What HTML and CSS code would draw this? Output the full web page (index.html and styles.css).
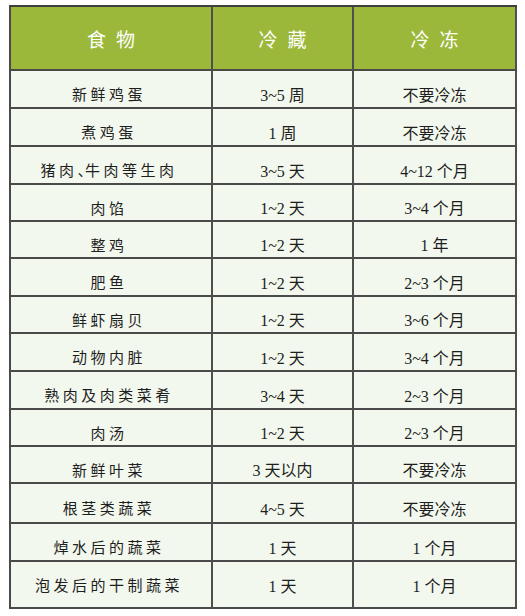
FILE: index.html
```
<!DOCTYPE html>
<html lang="zh-CN">
<head>
<meta charset="utf-8">
<title>食物储存时间</title>
<link rel="stylesheet" href="styles.css">
</head>
<body>
<div class="wrap">
  <div class="table">
    <div class="cell head">食物</div>
    <div class="cell head">冷藏</div>
    <div class="cell head">冷冻</div>

    <div class="cell food">新鲜鸡蛋</div><div class="cell">3~5 周</div><div class="cell">不要冷冻</div>
    <div class="cell food">煮鸡蛋</div><div class="cell">1 周</div><div class="cell">不要冷冻</div>
    <div class="cell food">猪肉<span class="comma">、</span>牛肉等生肉</div><div class="cell">3~5 天</div><div class="cell">4~12 个月</div>
    <div class="cell food">肉馅</div><div class="cell">1~2 天</div><div class="cell">3~4 个月</div>
    <div class="cell food">整鸡</div><div class="cell">1~2 天</div><div class="cell">1 年</div>
    <div class="cell food">肥鱼</div><div class="cell">1~2 天</div><div class="cell">2~3 个月</div>
    <div class="cell food">鲜虾扇贝</div><div class="cell">1~2 天</div><div class="cell">3~6 个月</div>
    <div class="cell food">动物内脏</div><div class="cell">1~2 天</div><div class="cell">3~4 个月</div>
    <div class="cell food">熟肉及肉类菜肴</div><div class="cell">3~4 天</div><div class="cell">2~3 个月</div>
    <div class="cell food">肉汤</div><div class="cell">1~2 天</div><div class="cell">2~3 个月</div>
    <div class="cell food">新鲜叶菜</div><div class="cell">3 天以内</div><div class="cell">不要冷冻</div>
    <div class="cell food">根茎类蔬菜</div><div class="cell">4~5 天</div><div class="cell">不要冷冻</div>
    <div class="cell food">焯水后的蔬菜</div><div class="cell">1 天</div><div class="cell">1 个月</div>
    <div class="cell food last">泡发后的干制蔬菜</div><div class="cell last">1 天</div><div class="cell last">1 个月</div>
  </div>
</div>
</body>
</html>
```

FILE: styles.css
```
html, body {
  margin: 0;
  padding: 0;
  background: #ffffff;
}

.wrap {
  padding: 5px 0 0 9px;
}

.table {
  display: grid;
  grid-template-columns: 202px 141px 163px;
  grid-template-rows: 64px 38px 38px 38px 37px 37px 38px 37px 38px 38px 37px 37px 40px 38px 47px;
  width: max-content;
  border-top: 2px solid #3f3f3f;
  border-left: 2px solid #4a4a4a;
  background: #f3f8ee;
  font-family: "Liberation Serif", "Noto Sans CJK SC", serif;
  font-size: 16px;
  color: #1e1e1e;
}

.cell {
  box-sizing: border-box;
  border-right: 2px solid #4f4f4f;
  border-bottom: 2px solid #4a4a4a;
  display: flex;
  align-items: center;
  justify-content: center;
  padding-top: 9px;
  white-space: nowrap;
}

.cell.head {
  background: #9bb83b;
  color: #ffffff;
  font-family: "Noto Sans CJK SC", sans-serif;
  font-size: 19px;
  letter-spacing: 10px;
  padding-top: 0;
  padding-left: 10px;
}

.cell.food {
  font-family: "Noto Sans CJK SC", sans-serif;
  font-size: 15px;
  letter-spacing: 3.5px;
  padding-left: 3px;
  padding-right: 7px;
}

.comma {
  letter-spacing: 0;
  font-feature-settings: "halt" 1;
}

.cell.last {
  padding-top: 0;
}
```
